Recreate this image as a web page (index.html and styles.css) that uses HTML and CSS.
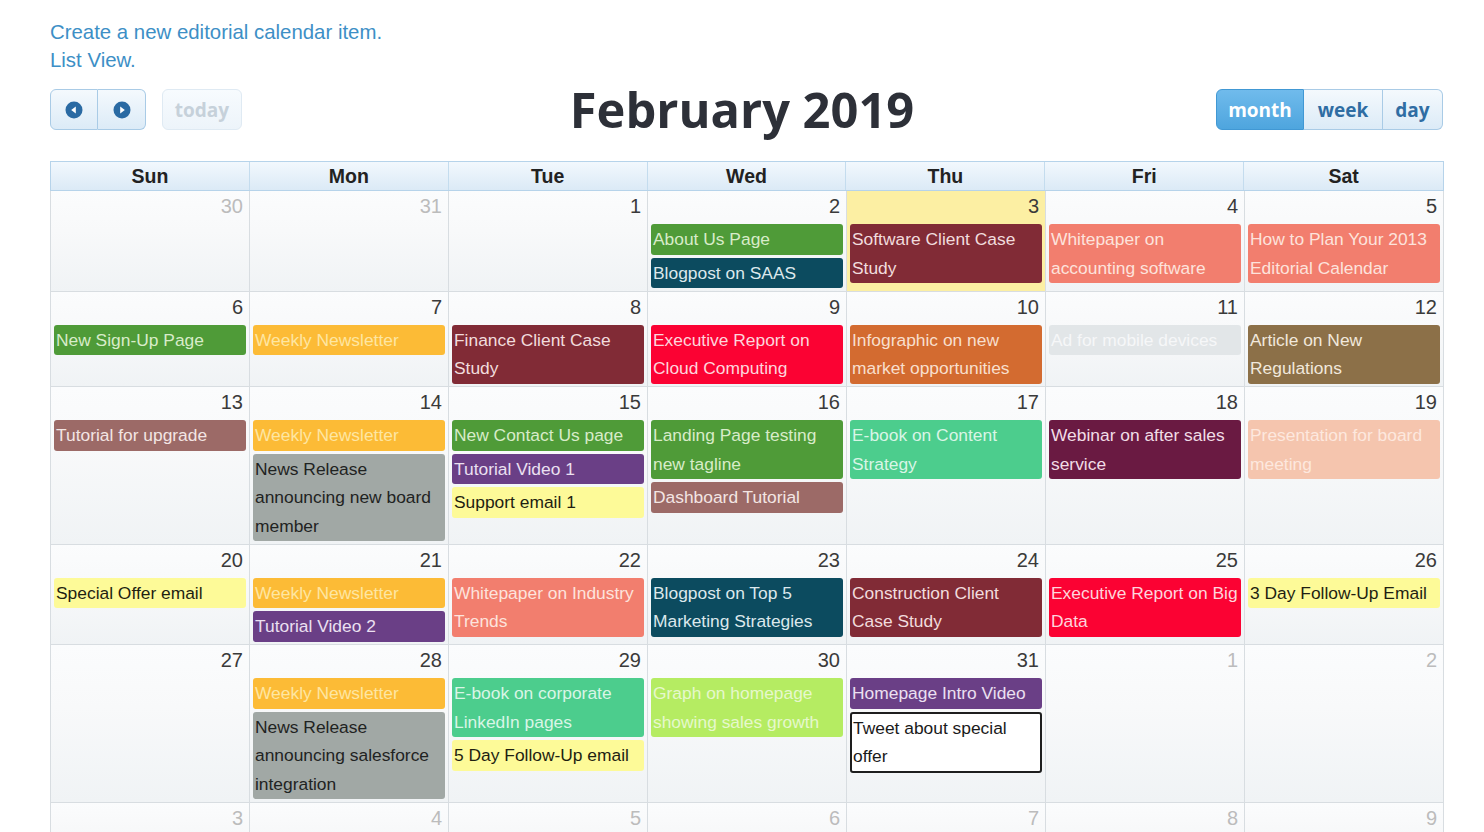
FILE: index.html
```html
<!DOCTYPE html>
<html lang="en">
<head>
    <meta charset="UTF-8">
    <meta name="viewport" content="width=device-width, initial-scale=1.0">
    <title>Editorial Calendar - February 2019</title>
    <link rel="stylesheet" href="styles.css">
</head>
<body>
    <!-- top links -->
    <div class="links">
        <a href="#" class="link">Create a new editorial calendar item.</a>
        <a href="#" class="link">List View.</a>
    </div>

    <!-- toolbar -->
    <div class="toolbar">
        <div class="tb-left">
            <div class="btn-group">
                <button class="btn btn-icon" aria-label="prev">
                    <svg width="18" height="18" viewBox="0 0 18 18"><circle cx="9" cy="9" r="8.5" fill="#2a6aa3"/><path d="M6.2 9 L10.8 5.6 L10.8 12.4 Z" fill="#fff"/></svg>
                </button>
                <button class="btn btn-icon" aria-label="next">
                    <svg width="18" height="18" viewBox="0 0 18 18"><circle cx="9" cy="9" r="8.5" fill="#2a6aa3"/><path d="M11.8 9 L7.2 5.6 L7.2 12.4 Z" fill="#fff"/></svg>
                </button>
            </div>
            <button class="btn btn-today">today</button>
        </div>
        <h1 class="title">February 2019</h1>
        <div class="tb-right">
            <div class="btn-group">
                <button class="btn btn-view active">month</button>
                <button class="btn btn-view">week</button>
                <button class="btn btn-view">day</button>
            </div>
        </div>
    </div>

    <!-- month grid -->
    <div class="calendar">
        <div class="cal-head">
            <div class="dow">Sun</div>
            <div class="dow">Mon</div>
            <div class="dow">Tue</div>
            <div class="dow">Wed</div>
            <div class="dow">Thu</div>
            <div class="dow">Fri</div>
            <div class="dow">Sat</div>
        </div>

        <div class="week">
            <div class="day other"><div class="num">30</div></div>
            <div class="day other"><div class="num">31</div></div>
            <div class="day"><div class="num">1</div></div>
            <div class="day"><div class="num">2</div>
                <div class="ev green">About Us Page</div>
                <div class="ev teal">Blogpost on SAAS</div>
            </div>
            <div class="day today"><div class="num">3</div>
                <div class="ev maroon">Software Client Case Study</div>
            </div>
            <div class="day"><div class="num">4</div>
                <div class="ev salmon">Whitepaper on accounting software</div>
            </div>
            <div class="day"><div class="num">5</div>
                <div class="ev salmon">How to Plan Your 2013 Editorial Calendar</div>
            </div>
        </div>

        <div class="week">
            <div class="day"><div class="num">6</div>
                <div class="ev green">New Sign-Up Page</div>
            </div>
            <div class="day"><div class="num">7</div>
                <div class="ev amber">Weekly Newsletter</div>
            </div>
            <div class="day"><div class="num">8</div>
                <div class="ev maroon">Finance Client Case Study</div>
            </div>
            <div class="day"><div class="num">9</div>
                <div class="ev red">Executive Report on Cloud Computing</div>
            </div>
            <div class="day"><div class="num">10</div>
                <div class="ev orange">Infographic on new market opportunities</div>
            </div>
            <div class="day"><div class="num">11</div>
                <div class="ev pale">Ad for mobile devices</div>
            </div>
            <div class="day"><div class="num">12</div>
                <div class="ev brown">Article on New Regulations</div>
            </div>
        </div>

        <div class="week">
            <div class="day"><div class="num">13</div>
                <div class="ev rose">Tutorial for upgrade</div>
            </div>
            <div class="day"><div class="num">14</div>
                <div class="ev amber">Weekly Newsletter</div>
                <div class="ev gray">News Release announcing new board member</div>
            </div>
            <div class="day"><div class="num">15</div>
                <div class="ev green">New Contact Us page</div>
                <div class="ev purple">Tutorial Video 1</div>
                <div class="ev yellow">Support email 1</div>
            </div>
            <div class="day"><div class="num">16</div>
                <div class="ev green">Landing Page testing new tagline</div>
                <div class="ev rose">Dashboard Tutorial</div>
            </div>
            <div class="day"><div class="num">17</div>
                <div class="ev mint">E-book on Content Strategy</div>
            </div>
            <div class="day"><div class="num">18</div>
                <div class="ev plum">Webinar on after sales service</div>
            </div>
            <div class="day"><div class="num">19</div>
                <div class="ev peach">Presentation for board meeting</div>
            </div>
        </div>

        <div class="week">
            <div class="day"><div class="num">20</div>
                <div class="ev yellow">Special Offer email</div>
            </div>
            <div class="day"><div class="num">21</div>
                <div class="ev amber">Weekly Newsletter</div>
                <div class="ev purple">Tutorial Video 2</div>
            </div>
            <div class="day"><div class="num">22</div>
                <div class="ev salmon">Whitepaper on Industry Trends</div>
            </div>
            <div class="day"><div class="num">23</div>
                <div class="ev teal">Blogpost on Top 5 Marketing Strategies</div>
            </div>
            <div class="day"><div class="num">24</div>
                <div class="ev maroon">Construction Client Case Study</div>
            </div>
            <div class="day"><div class="num">25</div>
                <div class="ev red">Executive Report on Big Data</div>
            </div>
            <div class="day"><div class="num">26</div>
                <div class="ev yellow">3 Day Follow-Up Email</div>
            </div>
        </div>

        <div class="week">
            <div class="day"><div class="num">27</div></div>
            <div class="day"><div class="num">28</div>
                <div class="ev amber">Weekly Newsletter</div>
                <div class="ev gray">News Release announcing salesforce integration</div>
            </div>
            <div class="day"><div class="num">29</div>
                <div class="ev mint">E-book on corporate LinkedIn pages</div>
                <div class="ev yellow">5 Day Follow-Up email</div>
            </div>
            <div class="day"><div class="num">30</div>
                <div class="ev lime">Graph on homepage showing sales growth</div>
            </div>
            <div class="day"><div class="num">31</div>
                <div class="ev purple">Homepage Intro Video</div>
                <div class="ev outline">Tweet about special offer</div>
            </div>
            <div class="day other"><div class="num">1</div></div>
            <div class="day other"><div class="num">2</div></div>
        </div>

        <div class="week last">
            <div class="day other"><div class="num">3</div></div>
            <div class="day other"><div class="num">4</div></div>
            <div class="day other"><div class="num">5</div></div>
            <div class="day other"><div class="num">6</div></div>
            <div class="day other"><div class="num">7</div></div>
            <div class="day other"><div class="num">8</div></div>
            <div class="day other"><div class="num">9</div></div>
        </div>
    </div>
</body>
</html>
```

FILE: styles.css
```css
/* base */
body {
    margin: 0;
    padding: 18px 40px 0 50px;
    background: #fff;
    font-family: "Liberation Sans", Arial, sans-serif;
    color: #333;
}

/* top links */
.links {
    display: flex;
    flex-direction: column;
    align-items: flex-start;
}

.link {
    font-size: 20.4px;
    line-height: 28px;
    color: #3d8fc6;
    text-decoration: none;
}

/* toolbar */
.toolbar {
    display: grid;
    grid-template-columns: 1fr auto 1fr;
    align-items: center;
    margin-top: 15px;
    width: 1393px;
    height: 41px;
}

.tb-left {
    display: flex;
    gap: 16px;
}

.tb-right {
    display: flex;
    justify-content: flex-end;
}

.title {
    margin: 0 9px 0 0;
    font-family: "Open Sans", sans-serif;
    font-weight: 700;
    font-size: 48.8px;
    line-height: 41px;
    color: #2d3038;
}

.btn-group {
    display: flex;
}

.btn {
    height: 41px;
    margin: 0;
    padding: 0 12px;
    border: 1px solid #a9cbe6;
    background: linear-gradient(#f4f9fd, #dcebf7);
    font-family: "Open Sans", sans-serif;
    font-weight: 700;
    font-size: 19px;
    color: #2f6da3;
    cursor: pointer;
}

.btn-group .btn {
    border-radius: 0;
    border-left-width: 0;
}

.btn-group .btn:first-child {
    border-left-width: 1px;
    border-radius: 6px 0 0 6px;
}

.btn-group .btn:last-child {
    border-radius: 0 6px 6px 0;
}

.btn-icon {
    display: flex;
    align-items: center;
    justify-content: center;
    width: 48px;
    padding: 0;
}

.btn-today {
    width: 80px;
    padding: 0;
    border-color: #dfeaf3;
    border-radius: 6px;
    background: linear-gradient(#f7fbfe, #edf4fa);
    color: #c6d1da;
}

.btn-view {
    padding: 0;
}

.btn-view:nth-child(1) { width: 88px; }
.btn-view:nth-child(2) { width: 79px; }
.btn-view:nth-child(3) { width: 60px; }

.btn-view.active {
    background: linear-gradient(#70bbec, #4ea5de);
    border-color: #4198d4;
    color: #fff;
}

/* calendar grid */
.calendar {
    margin-top: 31px;
    width: 1394px;
}

.cal-head {
    display: grid;
    grid-template-columns: repeat(7, 1fr);
    height: 30px;
    box-sizing: border-box;
    border: 1px solid #b6d3ea;
    background: linear-gradient(#f2f8fd, #dbeaf6);
}

.dow {
    border-right: 1px solid #c4dcee;
    text-align: center;
    font-weight: 700;
    font-size: 19.5px;
    line-height: 28px;
    color: #222;
}

.dow:last-child {
    border-right: 0;
}

.week {
    display: grid;
    grid-template-columns: repeat(7, 1fr);
    border-left: 1px solid #d8dde1;
}

.day {
    min-width: 0;
    padding-bottom: 2.5px;
    border-right: 1px solid #d8dde1;
    border-bottom: 1px solid #d8dde1;
    background: linear-gradient(#fbfcfd 0%, #f8f9fa 40%, #f0f3f5 100%);
}

.day.today {
    background: #fcefa3;
}

.week.last .day {
    min-height: 60px;
}

.num {
    height: 30px;
    padding-right: 6px;
    text-align: right;
    font-size: 20px;
    line-height: 30px;
    color: #3a3a3a;
}

.day.other .num {
    color: #bcbcbc;
}

/* events */
.ev {
    margin: 3px 3px 0;
    padding: 0 1px;
    border: 1px solid transparent;
    border-radius: 3px;
    font-size: 17.4px;
    line-height: 28.5px;
    color: #f3e9e9;
}

.green  { background: #4f9b38; color: #d8ecc9; }
.teal   { background: #0c4b5f; color: #dce8ec; }
.maroon { background: #812b36; color: #f1dcdd; }
.salmon { background: #f27e6e; color: #fde3dc; }
.amber  { background: #fcbb36; color: #fee6a2; }
.red    { background: #fb0233; color: #fed5dc; }
.orange { background: #d36b30; color: #f8dfcd; }
.pale   { background: #e2e6e8; color: #f6f7f8; }
.brown  { background: #8c7048; color: #f1e8dc; }
.rose   { background: #9c6a67; color: #f3e5e3; }
.gray   { background: #a1a8a5; color: #1f2322; }
.purple { background: #6a3f86; color: #ebe0f1; }
.yellow { background: #fdfa98; color: #1f1f12; }
.mint   { background: #4ccd8d; color: #d9f5e6; }
.plum   { background: #6a1a42; color: #f1dde6; }
.peach  { background: #f5c5ae; color: #fde8de; }
.lime   { background: #b5ec62; color: #e6f8cc; }

.outline {
    background: #fff;
    border: 2px solid #1e1e1e;
    color: #1a1a1a;
}
```
